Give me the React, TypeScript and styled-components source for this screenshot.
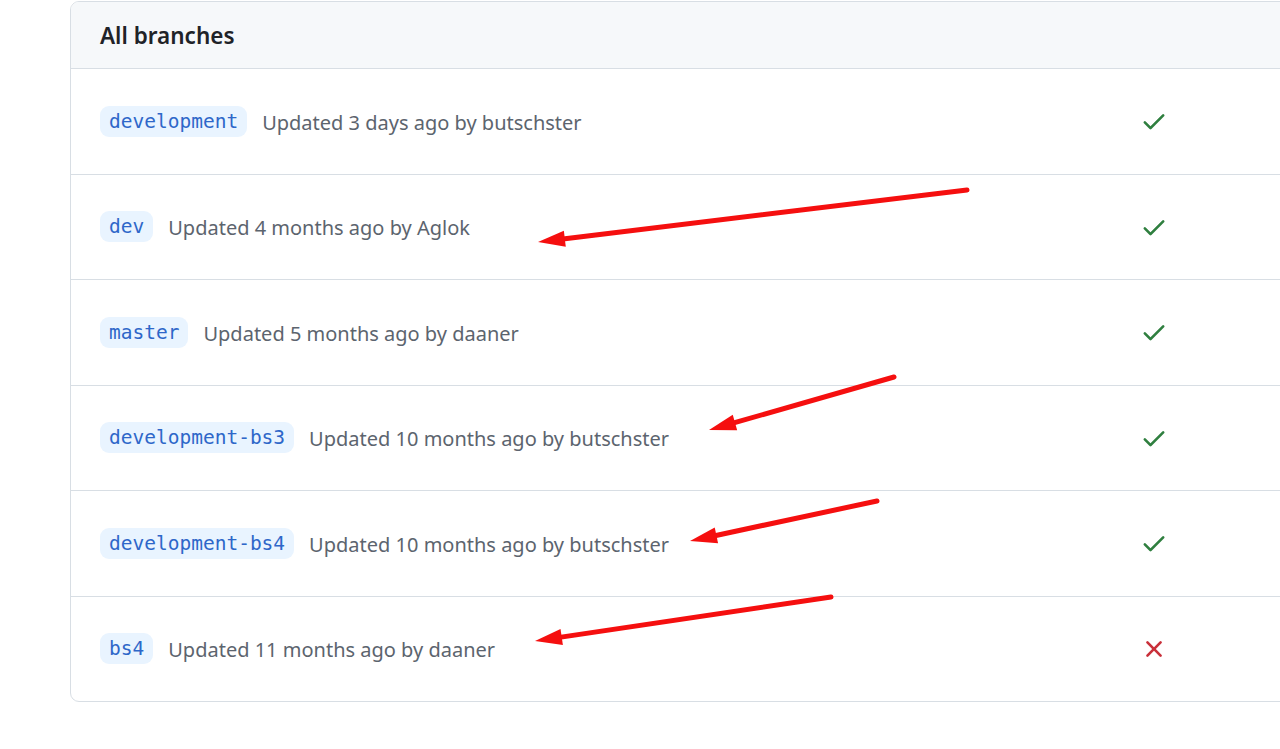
import React from "react";
import styled, { createGlobalStyle } from "styled-components";

const Global = createGlobalStyle`
  html, body { margin: 0; padding: 0; background: #ffffff; overflow: hidden; }
  body { font-family: "Noto Sans", "Open Sans", sans-serif; }
  #root { width: 1280px; height: 749px; position: relative; overflow: hidden; }
`;

const Page = styled.div`
  padding: 1px 0 0 70px;
`;

const Card = styled.div`
  width: 1240px;
  border: 1px solid #d8dee4;
  border-radius: 9px;
  overflow: hidden;
  background: #fff;
`;

const Header = styled.div`
  height: 66px;
  background: #f6f8fa;
  border-bottom: 1px solid #d8dee4;
  display: flex;
  align-items: center;
  padding-left: 29px;
  font-size: 22.5px;
  font-weight: 600;
  color: #1f2328;
`;

const Row = styled.div<{ $last?: boolean }>`
  height: 104.5px;
  display: flex;
  align-items: center;
  padding: 0 143px 0 29px;
  border-bottom: ${(p) => (p.$last ? "none" : "1px solid #d8dee4")};
`;

const Main = styled.div`
  flex: 1;
  display: flex;
  align-items: center;
  gap: 15px;
`;

const Branch = styled.span`
  font-family: "DejaVu Sans Mono", "Liberation Mono", monospace;
  font-size: 19.5px;
  line-height: 31px;
  height: 31px;
  padding: 0 9px;
  border-radius: 9px;
  background: #e9f4ff;
  color: #2e67c9;
`;

const Meta = styled.span`
  font-size: 20px;
  color: #5c646e;
  margin-top: 2px;
`;

const Status = styled.div`
  width: 28px;
  height: 28px;
  display: flex;
  align-items: center;
  justify-content: center;
`;

const Overlay = styled.svg`
  position: absolute;
  top: 0;
  left: 0;
  pointer-events: none;
`;

const Check = () => (
  <svg width="28" height="28" viewBox="0 0 16 16">
    <path
      d="M13.78 4.22a.75.75 0 0 1 0 1.06l-7.25 7.25a.75.75 0 0 1-1.06 0L2.22 9.28a.751.751 0 0 1 .018-1.042.751.751 0 0 1 1.042-.018L6 10.94l6.72-6.72a.75.75 0 0 1 1.06 0Z"
      fill="#2f7f3f"
    />
  </svg>
);

const Cross = () => (
  <svg width="28" height="28" viewBox="0 0 16 16">
    <path
      d="M3.72 3.72a.75.75 0 0 1 1.06 0L8 6.94l3.22-3.22a.749.749 0 0 1 1.275.326.749.749 0 0 1-.215.734L9.06 8l3.22 3.22a.749.749 0 0 1-.326 1.275.749.749 0 0 1-.734-.215L8 9.06l-3.22 3.22a.751.751 0 0 1-1.042-.018.751.751 0 0 1-.018-1.042L6.94 8 3.72 4.78a.75.75 0 0 1 0-1.06Z"
      fill="#c9303a"
    />
  </svg>
);

type Arrow = { x1: number; y1: number; x2: number; y2: number };

const arrows: Arrow[] = [
  { x1: 967, y1: 190, x2: 538, y2: 242 },
  { x1: 894, y1: 377, x2: 709, y2: 430 },
  { x1: 877, y1: 501, x2: 690, y2: 541 },
  { x1: 831, y1: 597, x2: 535, y2: 641 },
];

const ArrowShape = ({ a }: { a: Arrow }) => {
  const dx = a.x2 - a.x1;
  const dy = a.y2 - a.y1;
  const len = Math.hypot(dx, dy);
  const ux = dx / len;
  const uy = dy / len;
  const headLen = 27;
  const headHalf = 8;
  const bx = a.x2 - ux * headLen;
  const by = a.y2 - uy * headLen;
  const px = -uy;
  const py = ux;
  const pts = `${a.x2},${a.y2} ${bx + px * headHalf},${by + py * headHalf} ${bx - px * headHalf},${by - py * headHalf}`;
  return (
    <g>
      <line x1={a.x1} y1={a.y1} x2={bx + ux * 4} y2={by + uy * 4} stroke="#f50f0f" strokeWidth={5} strokeLinecap="round" />
      <polygon points={pts} fill="#f50f0f" />
    </g>
  );
};

const branches = [
  { name: "development", meta: "Updated 3 days ago by butschster", ok: true },
  { name: "dev", meta: "Updated 4 months ago by Aglok", ok: true },
  { name: "master", meta: "Updated 5 months ago by daaner", ok: true },
  { name: "development-bs3", meta: "Updated 10 months ago by butschster", ok: true },
  { name: "development-bs4", meta: "Updated 10 months ago by butschster", ok: true },
  { name: "bs4", meta: "Updated 11 months ago by daaner", ok: false },
];

export default function App() {
  return (
    <>
      <Global />
      <Page>
        <Card>
          <Header>All branches</Header>
          {branches.map((b, i) => (
            <Row key={b.name} $last={i === branches.length - 1}>
              <Main>
                <Branch>{b.name}</Branch>
                <Meta>{b.meta}</Meta>
              </Main>
              <Status>{b.ok ? <Check /> : <Cross />}</Status>
            </Row>
          ))}
        </Card>
      </Page>
      <Overlay width={1280} height={749} viewBox="0 0 1280 749">
        {arrows.map((a, i) => (
          <ArrowShape key={i} a={a} />
        ))}
      </Overlay>
    </>
  );
}
